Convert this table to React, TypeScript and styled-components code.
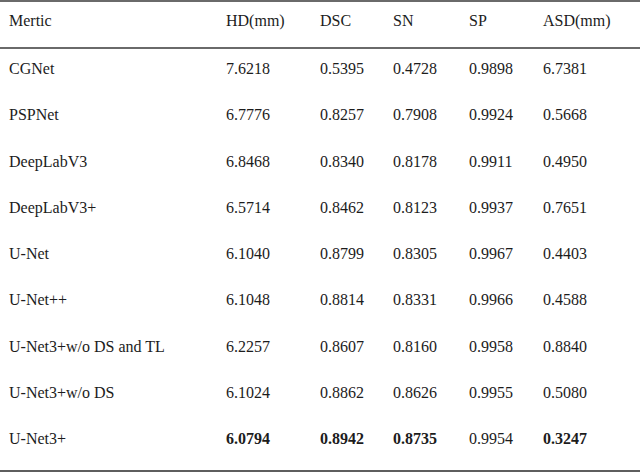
import styled, {createGlobalStyle} from 'styled-components'

interface IResult {
	name: string
	values: Array<string>
	bold?: Array<boolean>
}

const columns = ['Mertic', 'HD(mm)', 'DSC', 'SN', 'SP', 'ASD(mm)']

const results: Array<IResult> = [
	{name: 'CGNet', values: ['7.6218', '0.5395', '0.4728', '0.9898', '6.7381']},
	{name: 'PSPNet', values: ['6.7776', '0.8257', '0.7908', '0.9924', '0.5668']},
	{name: 'DeepLabV3', values: ['6.8468', '0.8340', '0.8178', '0.9911', '0.4950']},
	{name: 'DeepLabV3+', values: ['6.5714', '0.8462', '0.8123', '0.9937', '0.7651']},
	{name: 'U-Net', values: ['6.1040', '0.8799', '0.8305', '0.9967', '0.4403']},
	{name: 'U-Net++', values: ['6.1048', '0.8814', '0.8331', '0.9966', '0.4588']},
	{name: 'U-Net3+w/o DS and TL', values: ['6.2257', '0.8607', '0.8160', '0.9958', '0.8840']},
	{name: 'U-Net3+w/o DS', values: ['6.1024', '0.8862', '0.8626', '0.9955', '0.5080']},
	{
		name: 'U-Net3+',
		values: ['6.0794', '0.8942', '0.8735', '0.9954', '0.3247'],
		bold: [true, true, true, false, true],
	},
]

function App() {
	return (
		<>
			<GlobalStyle />
			<Table>
				<HeaderRow>
					{columns.map((col) => (
						<Cell key={col}>{col}</Cell>
					))}
				</HeaderRow>
				<Body>
					{results.map((row) => (
						<Row key={row.name}>
							<Cell>{row.name}</Cell>
							{row.values.map((value, id) => (
								<Cell key={id} $bold={row.bold?.[id]}>
									{value}
								</Cell>
							))}
						</Row>
					))}
				</Body>
			</Table>
		</>
	)
}

const GlobalStyle = createGlobalStyle`
	body {
		margin: 0;
		background: #ffffff;
	}
`
const Table = styled.div`
	width: 640px;
	font-family: 'Liberation Serif', 'Times New Roman', serif;
	font-size: 16px;
	line-height: 18px;
	color: #1c1c1c;
	border-top: 2px solid #6a6a6a;
	border-bottom: 2px solid #5e5e5e;
`
const RowBase = styled.div`
	display: grid;
	grid-template-columns: 217px 94px 73px 76px 74px 1fr;
	padding-left: 9px;
	box-sizing: border-box;
`
const HeaderRow = styled(RowBase)`
	height: 47px;
	padding-top: 10px;
	border-bottom: 2px solid #6a6a6a;
`
const Body = styled.div`
	padding-bottom: 5px;
`
const Row = styled(RowBase)`
	height: 46.25px;
	padding-top: 11px;
`
const Cell = styled.div<{$bold?: boolean}>`
	white-space: nowrap;
	font-weight: ${(p) => (p.$bold ? 700 : 400)};
`

export default App
